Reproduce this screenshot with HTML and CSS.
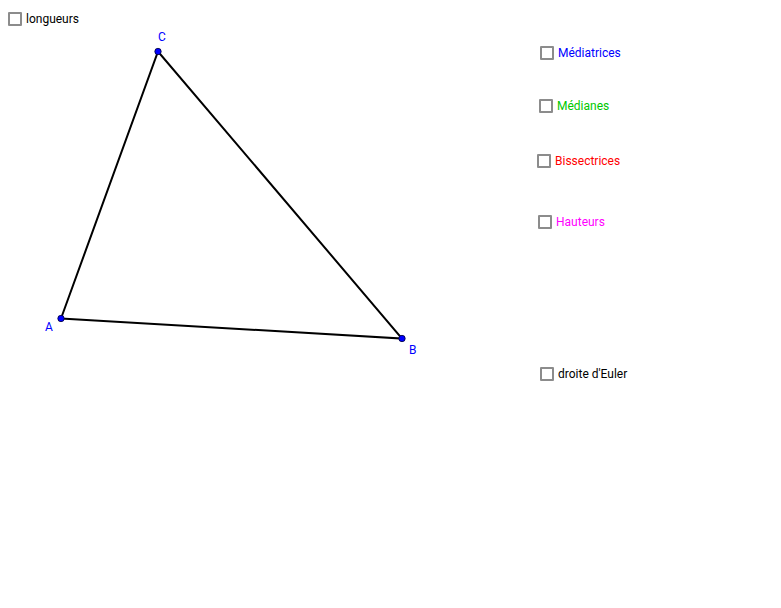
FILE: index.html
```html
<!DOCTYPE html>
<html lang="fr">
<head>
<meta charset="utf-8">
<title>Triangle</title>
<link rel="stylesheet" href="styles.css">
</head>
<body>
<div class="canvas">
  <svg class="figure" width="781" height="608" viewBox="0 0 781 608">
    <polygon points="61,318.5 402,338.5 158,51.5" fill="none" stroke="#000" stroke-width="2"/>
    <circle cx="61" cy="318.5" r="3.2" fill="#0000ff" stroke="#000033" stroke-width="0.8"/>
    <circle cx="402" cy="338.5" r="3.2" fill="#0000ff" stroke="#000033" stroke-width="0.8"/>
    <circle cx="158" cy="51.5" r="3.2" fill="#0000ff" stroke="#000033" stroke-width="0.8"/>
    <text x="45" y="331" class="pt">A</text>
    <text x="409" y="354" class="pt">B</text>
    <text x="158" y="41" class="pt">C</text>
  </svg>

  <label class="cb cb-longueurs"><span class="box"></span><span class="lbl">longueurs</span></label>
  <label class="cb cb-med"><span class="box"></span><span class="lbl blue">Médiatrices</span></label>
  <label class="cb cb-medianes"><span class="box"></span><span class="lbl green">Médianes</span></label>
  <label class="cb cb-bis"><span class="box"></span><span class="lbl red">Bissectrices</span></label>
  <label class="cb cb-haut"><span class="box"></span><span class="lbl magenta">Hauteurs</span></label>
  <label class="cb cb-euler"><span class="box"></span><span class="lbl">droite d'Euler</span></label>
</div>
</body>
</html>
```
FILE: styles.css
```css
html, body {
  margin: 0;
  padding: 0;
  background: #fff;
}
body {
  font-family: Roboto, "Liberation Sans", sans-serif;
  font-size: 12px;
  color: #000;
}
.canvas {
  position: relative;
  width: 781px;
  height: 608px;
  overflow: hidden;
}
.figure {
  position: absolute;
  left: 0;
  top: 0;
}
.pt {
  font-family: Roboto, "Liberation Sans", sans-serif;
  font-size: 12px;
  fill: #0000ff;
}
.cb {
  position: absolute;
  display: flex;
  align-items: center;
  gap: 4px;
  height: 14px;
  line-height: 14px;
}
.box {
  width: 10px;
  height: 10px;
  border: 2px solid #8c8c8c;
  border-radius: 1px;
  background: #fff;
  box-sizing: content-box;
  flex: none;
}
.lbl {
  white-space: nowrap;
}
.blue { color: #0000ff; }
.green { color: #00c800; }
.red { color: #ff0000; }
.magenta { color: #ff00ff; }

.cb-longueurs { left: 8px; top: 12px; }
.cb-med { left: 540px; top: 46px; }
.cb-medianes { left: 539px; top: 99px; }
.cb-bis { left: 537px; top: 154px; }
.cb-haut { left: 538px; top: 215px; }
.cb-euler { left: 540px; top: 367px; }
```
